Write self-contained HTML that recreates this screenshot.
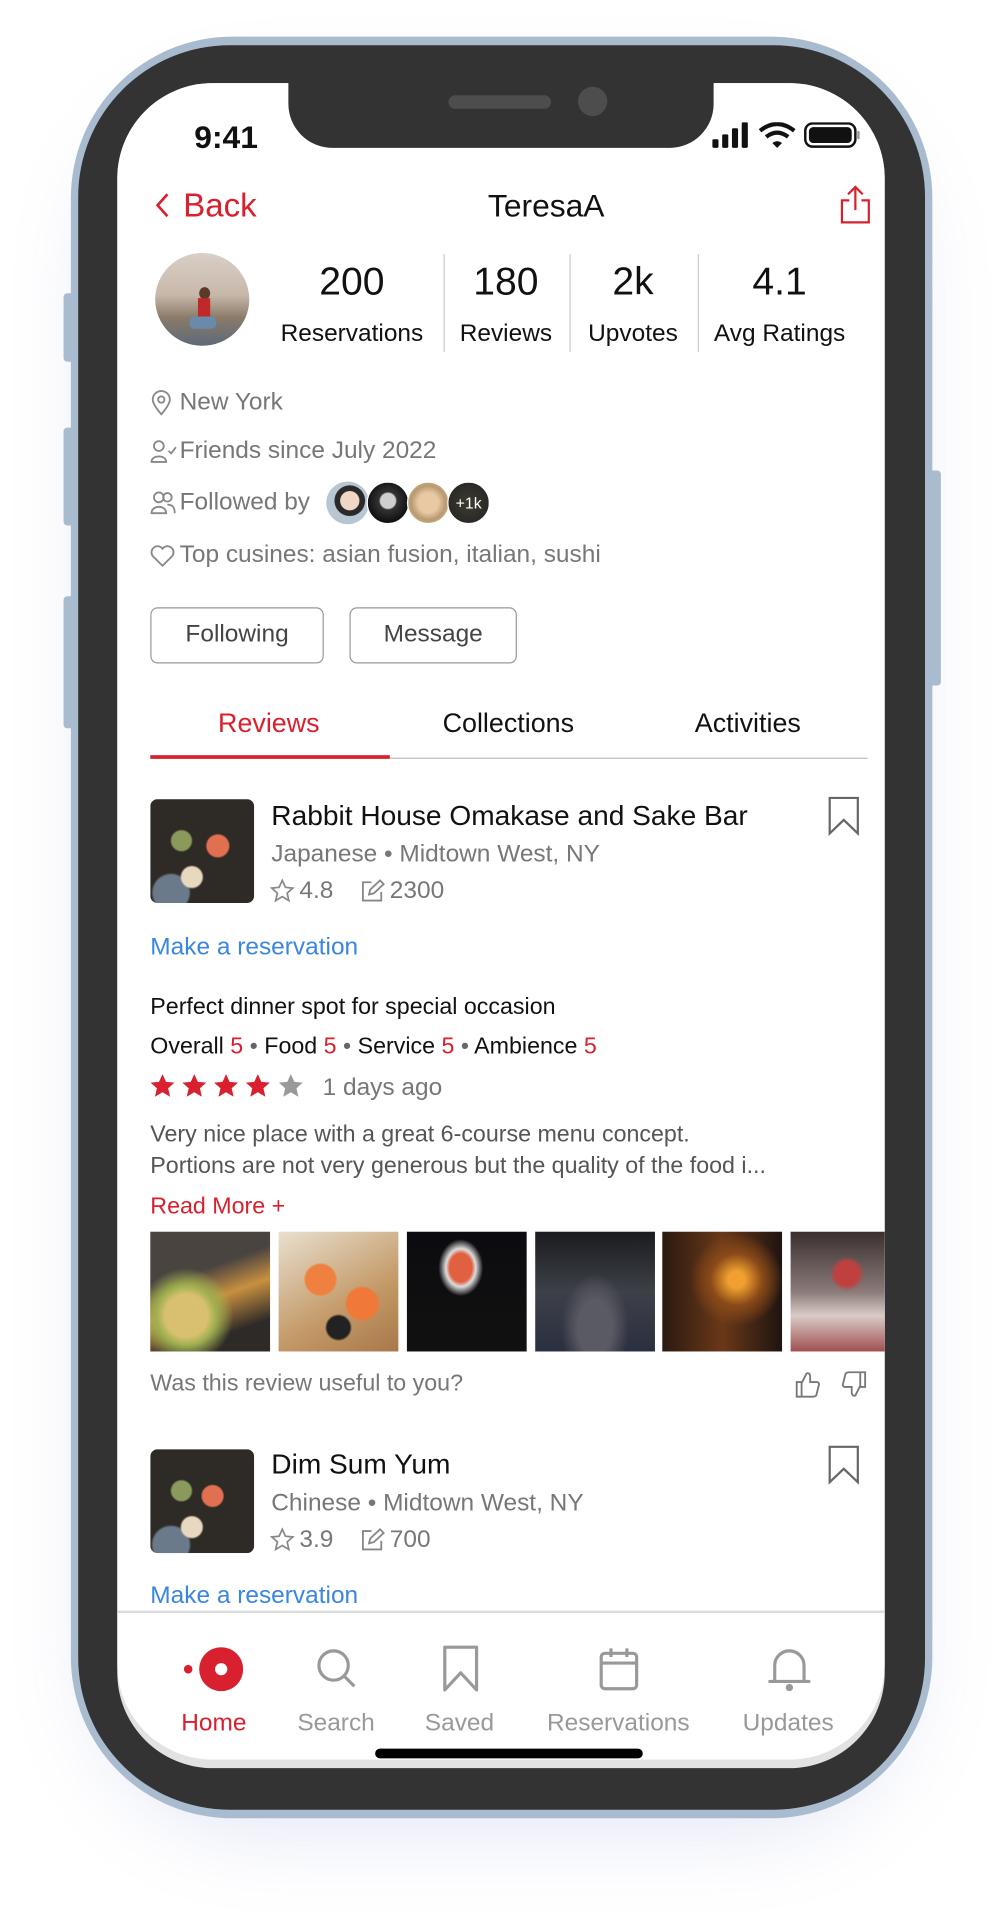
<!DOCTYPE html>
<html><head><meta charset="utf-8"><style>
*{margin:0;padding:0;box-sizing:border-box}
html,body{width:1002px;height:1913px;overflow:hidden;background:#fff;font-family:"Liberation Sans",sans-serif}
#w{position:absolute;left:0;top:0;width:820px;height:1566px;transform:scale(1.22195);transform-origin:0 0}
.a{position:absolute}
.t{position:absolute;white-space:nowrap;line-height:1}
.g{color:#777}
.c{transform:translateX(-50%)}
.red{color:#d8202e}
.ph{position:absolute;top:1008px;height:98px;width:98px}
</style></head><body><div id="w">
<!-- shadow -->
<div class="a" style="left:80px;top:60px;width:660px;height:1410px;border-radius:130px;box-shadow:0 25px 70px rgba(120,130,210,.22)"></div>
<!-- side buttons -->
<div class="a" style="left:52px;top:240px;width:10px;height:56px;background:#a9bccf;border-radius:3px"></div>
<div class="a" style="left:52px;top:350px;width:10px;height:80px;background:#a9bccf;border-radius:3px"></div>
<div class="a" style="left:52px;top:488px;width:10px;height:108px;background:#a9bccf;border-radius:3px"></div>
<div class="a" style="left:760px;top:385px;width:10px;height:176px;background:#a9bccf;border-radius:3px"></div>
<!-- phone -->
<div class="a" style="left:58px;top:30px;width:705px;height:1458px;background:#a9bccf;border-radius:132px"></div>
<div class="a" style="left:64px;top:37px;width:693px;height:1444px;background:#333;border-radius:124px"></div>
<div class="a" style="left:96px;top:68px;width:628px;height:1379px;background:#e2e2e2;border-radius:78px"></div>
<div class="a" style="left:96px;top:68px;width:628px;height:1372px;background:#fff;border-radius:78px;overflow:hidden">
</div>
<!-- notch -->
<div class="a" style="left:236px;top:60px;width:348px;height:61px;background:#333;border-radius:0 0 36px 36px"></div>
<div class="a" style="left:367px;top:78px;width:84px;height:11px;background:#4d4d4d;border-radius:6px"></div>
<div class="a" style="left:473px;top:71px;width:24px;height:24px;background:#4d4d4d;border-radius:50%"></div>
<!-- status -->
<div class="t" style="left:159px;top:99px;font-size:26px;font-weight:bold;color:#111">9:41</div>
<svg class="a" style="left:582px;top:100px" width="122" height="22">
<rect x="1" y="14" width="5" height="7" rx="1" fill="#111"/><rect x="9" y="10" width="5" height="11" rx="1" fill="#111"/><rect x="17" y="5" width="5" height="16" rx="1" fill="#111"/><rect x="25" y="0" width="5" height="21" rx="1" fill="#111"/>
<path d="M40 7 Q54 -4 68 7" stroke="#111" stroke-width="3.4" fill="none"/><path d="M45 12 Q54 5 63 12" stroke="#111" stroke-width="3.4" fill="none"/><path d="M50 17 L54 21 L58 17 Q54 14 50 17Z" fill="#111"/>
<rect x="77" y="1" width="41" height="19" rx="6" fill="none" stroke="#111" stroke-width="2"/><rect x="80" y="4" width="35" height="13" rx="3.5" fill="#111"/><rect x="119.5" y="7" width="2" height="7" rx="1" fill="#999"/>
</svg>
<!-- nav -->
<svg class="a" style="left:126px;top:157px" width="14" height="22"><path d="M11 2 L3 11 L11 20" stroke="#d8202e" stroke-width="2.2" fill="none"/></svg>
<div class="t red" style="left:150px;top:155px;font-size:27px">Back</div>
<div class="t c" style="left:447px;top:155px;font-size:26px;color:#111">TeresaA</div>
<svg class="a" style="left:686px;top:151px" width="28" height="33"><path d="M14 2 V21 M8 8 L14 2 L20 8" stroke="#d8202e" stroke-width="1.8" fill="none"/><path d="M9 13 H3 V31 H25 V13 H19" stroke="#d8202e" stroke-width="1.8" fill="none"/></svg>
<!-- avatar -->
<div class="a" style="left:127px;top:207px;width:77px;height:76px;border-radius:50%;background:linear-gradient(180deg,#d9cfc6 0%,#c8b8aa 45%,#8a7a68 70%,#5d6a7a 100%);overflow:hidden">
<div class="a" style="left:36px;top:28px;width:9px;height:10px;border-radius:50%;background:#5a3a2a"></div>
<div class="a" style="left:35px;top:37px;width:10px;height:16px;background:#c0282a"></div>
<div class="a" style="left:28px;top:52px;width:22px;height:10px;background:#6a8aab;border-radius:4px"></div>
</div>
<!-- stats -->
<div class="t c" style="left:288px;top:214px;font-size:32px;color:#111">200</div>
<div class="t c" style="left:288px;top:263px;font-size:20px;color:#111">Reservations</div>
<div class="t c" style="left:414px;top:214px;font-size:32px;color:#111">180</div>
<div class="t c" style="left:414px;top:263px;font-size:20px;color:#111">Reviews</div>
<div class="t c" style="left:518px;top:214px;font-size:32px;color:#111">2k</div>
<div class="t c" style="left:518px;top:263px;font-size:20px;color:#111">Upvotes</div>
<div class="t c" style="left:638px;top:214px;font-size:32px;color:#111">4.1</div>
<div class="t c" style="left:638px;top:263px;font-size:20px;color:#111">Avg Ratings</div>
<div class="a" style="left:363px;top:208px;width:1px;height:80px;background:#ccc"></div>
<div class="a" style="left:466px;top:208px;width:1px;height:80px;background:#ccc"></div>
<div class="a" style="left:571px;top:208px;width:1px;height:80px;background:#ccc"></div>
<!-- info -->
<svg class="a" style="left:123px;top:319px" width="20" height="22"><path d="M9 20 C3 13 2 10 2 8 A7 7 0 0 1 16 8 C16 10 15 13 9 20Z" stroke="#888" stroke-width="1.5" fill="none"/><circle cx="9" cy="8" r="2.6" stroke="#888" stroke-width="1.5" fill="none"/></svg>
<div class="t g" style="left:147px;top:319px;font-size:20px">New York</div>
<svg class="a" style="left:122px;top:359px" width="24" height="22"><circle cx="8" cy="6" r="4" stroke="#888" stroke-width="1.5" fill="none"/><path d="M2 19 C2 13 14 13 14 19 Z" stroke="#888" stroke-width="1.5" fill="none"/><path d="M16 10 L18 12 L22 7" stroke="#888" stroke-width="1.5" fill="none"/></svg>
<div class="t g" style="left:147px;top:359px;font-size:20px">Friends since July 2022</div>
<svg class="a" style="left:122px;top:401px" width="24" height="22"><circle cx="8" cy="6" r="4" stroke="#888" stroke-width="1.5" fill="none"/><circle cx="15" cy="6" r="3.5" stroke="#888" stroke-width="1.5" fill="none"/><path d="M2 19 C2 12 14 12 14 19 Z" stroke="#888" stroke-width="1.5" fill="none"/><path d="M15 12 C20 12 21 15 21 19" stroke="#888" stroke-width="1.5" fill="none"/></svg>
<div class="t g" style="left:147px;top:401px;font-size:20px">Followed by</div>
<div class="a" style="left:267px;top:394px;width:35px;height:35px;border-radius:50%;background:radial-gradient(circle at 55% 45%,#f0d6c4 0 28%,#2a2a2a 30% 45%,#b8c6d2 47%)"></div>
<div class="a" style="left:300px;top:394px;width:35px;height:35px;border-radius:50%;background:radial-gradient(circle at 50% 45%,#cfcfcf 0 25%,#333 30%,#111 70%);border:1px solid #fff"></div>
<div class="a" style="left:333px;top:394px;width:35px;height:35px;border-radius:50%;background:radial-gradient(circle at 50% 50%,#e8c9a4 0 35%,#b99a70 60%,#d9c79f);border:1px solid #fff"></div>
<div class="a" style="left:366px;top:394px;width:35px;height:35px;border-radius:50%;background:radial-gradient(circle,#3d3a30,#222);border:1px solid #fff;color:#fff;font-size:13px;line-height:33px;text-align:center">+1k</div>
<svg class="a" style="left:122px;top:445px" width="22" height="20"><path d="M11 18 L3 10 A4.5 4.5 0 0 1 11 4 A4.5 4.5 0 0 1 19 10 Z" stroke="#888" stroke-width="1.5" fill="none"/></svg>
<div class="t g" style="left:147px;top:444px;font-size:20px">Top cusines: asian fusion, italian, sushi</div>
<!-- buttons -->
<div class="a" style="left:123px;top:497px;width:142px;height:46px;border:1.5px solid #999;border-radius:6px;font-size:20px;color:#444;text-align:center;line-height:43px">Following</div>
<div class="a" style="left:286px;top:497px;width:137px;height:46px;border:1.5px solid #999;border-radius:6px;font-size:20px;color:#444;text-align:center;line-height:43px">Message</div>
<!-- tabs -->
<div class="t c red" style="left:220px;top:581px;font-size:22px">Reviews</div>
<div class="t c" style="left:416px;top:581px;font-size:22px;color:#111">Collections</div>
<div class="t c" style="left:612px;top:581px;font-size:22px;color:#111">Activities</div>
<div class="a" style="left:123px;top:620px;width:587px;height:1px;background:#bbb"></div>
<div class="a" style="left:123px;top:618px;width:196px;height:3px;background:#d8202e"></div>
<!-- card 1 -->
<div class="a" style="left:123px;top:654px;width:85px;height:85px;border-radius:6px;background:radial-gradient(circle at 30% 40%,#8a9a5a 0 10%,transparent 12%),radial-gradient(circle at 65% 45%,#e07050 0 12%,transparent 14%),radial-gradient(circle at 40% 75%,#e8d8c0 0 10%,transparent 12%),radial-gradient(circle at 20% 90%,#6a7a8a 0 14%,transparent 16%),#2e2a26"></div>
<div class="t" style="left:222px;top:656px;font-size:23px;color:#111">Rabbit House Omakase and Sake Bar</div>
<div class="t g" style="left:222px;top:689px;font-size:20px">Japanese • Midtown West, NY</div>
<svg class="a" style="left:221px;top:719px" width="22" height="20"><path d="M10 1.5 L12.6 7.2 L18.6 7.8 L14 11.9 L15.4 18 L10 14.8 L4.6 18 L6 11.9 L1.4 7.8 L7.4 7.2 Z" stroke="#888" stroke-width="1.4" fill="none"/></svg>
<div class="t g" style="left:245px;top:719px;font-size:20px">4.8</div>
<svg class="a" style="left:295px;top:719px" width="22" height="20"><path d="M9 3 H2 V18 H17 V11" stroke="#888" stroke-width="1.5" fill="none"/><path d="M7 13 L8 9 L16 1.5 L19 4.5 L11 12 Z" stroke="#888" stroke-width="1.5" fill="none"/></svg>
<div class="t g" style="left:319px;top:719px;font-size:20px">2300</div>
<svg class="a" style="left:676px;top:651px" width="29" height="34"><path d="M3 2 H26 V31 L14.5 20 L3 31 Z" stroke="#666" stroke-width="1.8" fill="none"/></svg>
<div class="t" style="left:123px;top:765px;font-size:20px;color:#3a86df">Make a reservation</div>
<div class="t" style="left:123px;top:815px;font-size:19px;color:#111">Perfect dinner spot for special occasion</div>
<div class="t" style="left:123px;top:847px;font-size:19px;color:#111">Overall <span class="red">5</span> <span style="color:#666">•</span> Food <span class="red">5</span> <span style="color:#666">•</span> Service <span class="red">5</span> <span style="color:#666">•</span> Ambience <span class="red">5</span></div>
<svg class="a" style="left:122px;top:878px" width="130" height="22">
<g fill="#d8202e"><path id="s" d="M11 1 L13.9 7.4 L20.8 8 L15.6 12.6 L17.2 19.5 L11 15.9 L4.8 19.5 L6.4 12.6 L1.2 8 L8.1 7.4 Z"/><use href="#s" x="26"/><use href="#s" x="52"/><use href="#s" x="78"/></g><use href="#s" x="105" fill="#999"/></svg>
<div class="t g" style="left:264px;top:880px;font-size:20px">1 days ago</div>
<div class="t" style="left:123px;top:919px;font-size:19px;color:#555">Very nice place with a great 6-course menu concept.</div>
<div class="t" style="left:123px;top:945px;font-size:19px;color:#555">Portions are not very generous but the quality of the food i...</div>
<div class="t red" style="left:123px;top:978px;font-size:19px">Read More +</div>
<!-- photos -->
<div class="ph" style="left:123px;background:radial-gradient(ellipse at 30% 70%,#d8c070 0 18%,#a0b050 25%,transparent 40%),linear-gradient(160deg,#4a4440 0 35%,#c89040 55%,#2e2a28 80%)"></div>
<div class="ph" style="left:228px;background:radial-gradient(circle at 35% 40%,#f08040 0 14%,transparent 16%),radial-gradient(circle at 70% 60%,#f07838 0 14%,transparent 16%),radial-gradient(circle at 50% 80%,#222 0 10%,transparent 12%),linear-gradient(150deg,#e8e0d0,#c49a68 60%,#a87848)"></div>
<div class="ph" style="left:333px;background:radial-gradient(ellipse at 45% 30%,#e06040 0 12%,#ddd 16%,transparent 24%),linear-gradient(#0c0c10,#111)"></div>
<div class="ph" style="left:438px;background:radial-gradient(ellipse at 50% 80%,#5a5a62 0 20%,transparent 40%),linear-gradient(180deg,#1a1c20,#3e4048 50%,#2a3040)"></div>
<div class="ph" style="left:542px;background:radial-gradient(circle at 62% 40%,#f0a030 0 8%,#8a4a18 25%,transparent 45%),linear-gradient(90deg,#2a1a10,#6a3818 50%,#1e1410)"></div>
<div class="ph" style="left:647px;width:77px;background:radial-gradient(circle at 60% 35%,#c04040 0 12%,transparent 18%),linear-gradient(180deg,#3a3030,#8a7a78 50%,#d8ccc8 70%,#a05050)"></div>
<div class="t g" style="left:123px;top:1123px;font-size:19px">Was this review useful to you?</div>
<svg class="a" style="left:650px;top:1121px" width="62" height="24"><path d="M2 10 H6 V22 H2 Z M6 11 L10 3 Q13 2 13 6 V10 H19 Q21 11 20 13 L18 21 Q17 22 15 22 H6" stroke="#777" stroke-width="1.5" fill="none"/><path d="M58 14 H54 V2 H58 Z M54 13 L50 21 Q47 22 47 18 V14 H41 Q39 13 40 11 L42 3 Q43 2 45 2 H54" stroke="#777" stroke-width="1.5" fill="none"/></svg>
<!-- card 2 -->
<div class="a" style="left:123px;top:1186px;width:85px;height:85px;border-radius:6px;background:radial-gradient(circle at 30% 40%,#8a9a5a 0 10%,transparent 12%),radial-gradient(circle at 60% 45%,#e07050 0 12%,transparent 14%),radial-gradient(circle at 40% 75%,#e8d8c0 0 10%,transparent 12%),radial-gradient(circle at 20% 92%,#6a7a8a 0 14%,transparent 16%),#2e2a26"></div>
<div class="t" style="left:222px;top:1187px;font-size:23px;color:#111">Dim Sum Yum</div>
<div class="t g" style="left:222px;top:1220px;font-size:20px">Chinese • Midtown West, NY</div>
<svg class="a" style="left:221px;top:1250px" width="22" height="20"><path d="M10 1.5 L12.6 7.2 L18.6 7.8 L14 11.9 L15.4 18 L10 14.8 L4.6 18 L6 11.9 L1.4 7.8 L7.4 7.2 Z" stroke="#888" stroke-width="1.4" fill="none"/></svg>
<div class="t g" style="left:245px;top:1250px;font-size:20px">3.9</div>
<svg class="a" style="left:295px;top:1250px" width="22" height="20"><path d="M9 3 H2 V18 H17 V11" stroke="#888" stroke-width="1.5" fill="none"/><path d="M7 13 L8 9 L16 1.5 L19 4.5 L11 12 Z" stroke="#888" stroke-width="1.5" fill="none"/></svg>
<div class="t g" style="left:319px;top:1250px;font-size:20px">700</div>
<svg class="a" style="left:676px;top:1182px" width="29" height="34"><path d="M3 2 H26 V31 L14.5 20 L3 31 Z" stroke="#666" stroke-width="1.8" fill="none"/></svg>
<div class="a" style="left:123px;top:1296px;height:22px;overflow:hidden"><div style="font-size:20px;color:#3a86df;white-space:nowrap;line-height:1;padding-top:0">Make a reservation</div></div>
<!-- tab bar -->
<div class="a" style="left:96px;top:1318px;width:628px;height:2px;background:#ddd"></div>
<svg class="a" style="left:146px;top:1346px" width="58" height="40"><circle cx="8" cy="20" r="3.5" fill="#d8202e"/><circle cx="35" cy="20" r="18" fill="#d8202e"/><circle cx="35" cy="20" r="5" fill="#fff"/></svg>
<div class="t c red" style="left:175px;top:1400px;font-size:20px">Home</div>
<svg class="a" style="left:258px;top:1348px" width="36" height="36"><circle cx="15" cy="15" r="12" stroke="#999" stroke-width="2.6" fill="none"/><path d="M24 24 L32 32" stroke="#999" stroke-width="2.6"/></svg>
<div class="t c" style="left:275px;top:1400px;font-size:20px;color:#999">Search</div>
<svg class="a" style="left:361px;top:1346px" width="32" height="40"><path d="M3 2 H29 V37 L16 23 L3 37 Z" stroke="#999" stroke-width="2.6" fill="none" stroke-linejoin="round"/></svg>
<div class="t c" style="left:376px;top:1400px;font-size:20px;color:#999">Saved</div>
<svg class="a" style="left:489px;top:1347px" width="36" height="38"><rect x="3" y="6" width="29" height="29" rx="3" stroke="#999" stroke-width="2.6" fill="none"/><path d="M3 14 H32 M11 2 V9 M24 2 V9" stroke="#999" stroke-width="2.6"/></svg>
<div class="t c" style="left:506px;top:1400px;font-size:20px;color:#999">Reservations</div>
<svg class="a" style="left:627px;top:1347px" width="38" height="40"><path d="M7 28 V16 A12 12 0 0 1 31 16 V28 M3 29 H35" stroke="#999" stroke-width="2.6" fill="none" stroke-linecap="round"/><circle cx="19" cy="34" r="3" fill="#999"/></svg>
<div class="t c" style="left:645px;top:1400px;font-size:20px;color:#999">Updates</div>
<div class="a" style="left:307px;top:1431px;width:219px;height:8px;background:#000;border-radius:4px"></div>
</div></body></html>
